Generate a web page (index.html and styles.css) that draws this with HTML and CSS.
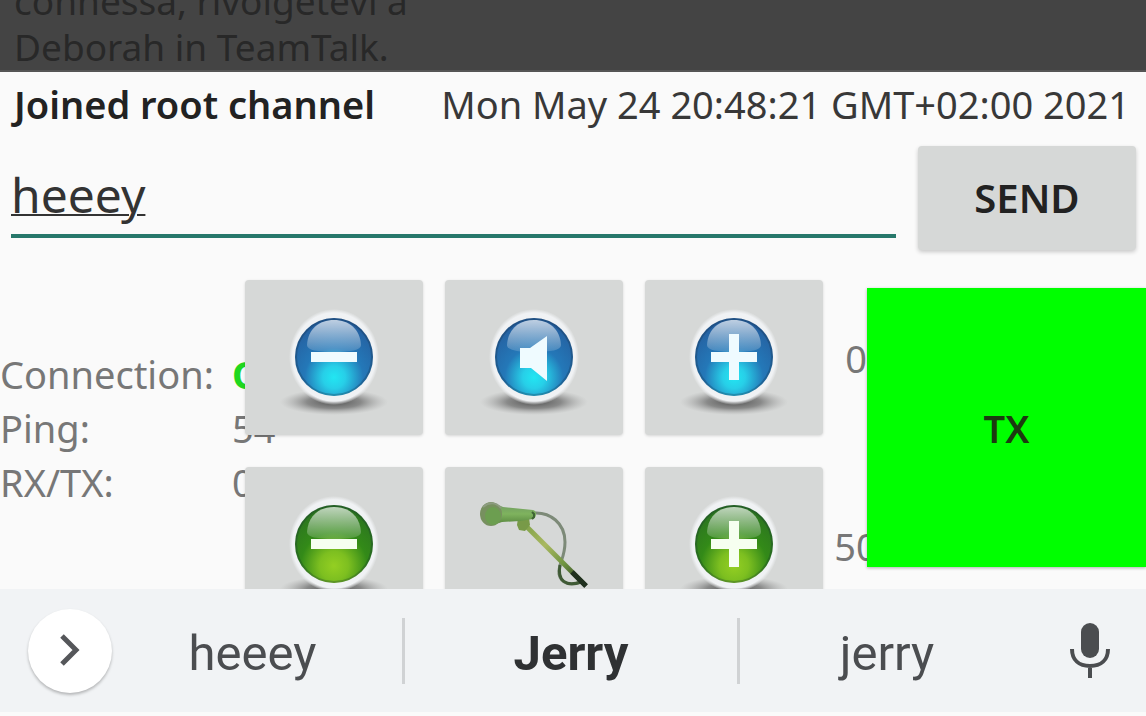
FILE: index.html
```html
<!DOCTYPE html>
<html lang="en">
<head>
<meta charset="utf-8">
<meta name="viewport" content="width=device-width, initial-scale=1">
<title>TeamTalk</title>
<link rel="stylesheet" href="styles.css">
</head>
<body>
<svg class="defs" aria-hidden="true">
  <defs>
    <radialGradient id="blue" cx="50%" cy="76%" r="72%">
      <stop offset="0" stop-color="#22e6f2"/><stop offset=".2" stop-color="#27cfe8"/><stop offset=".52" stop-color="#2478b8"/><stop offset="1" stop-color="#255f9f"/>
    </radialGradient>
    <radialGradient id="green" cx="50%" cy="78%" r="74%">
      <stop offset="0" stop-color="#94cf22"/><stop offset=".25" stop-color="#7dbf20"/><stop offset=".58" stop-color="#338a18"/><stop offset="1" stop-color="#2b7420"/>
    </radialGradient>
    <linearGradient id="gloss" x1="0" y1="0" x2="0" y2="1">
      <stop offset="0" stop-color="#fff" stop-opacity=".7"/><stop offset="1" stop-color="#fff" stop-opacity=".14"/>
    </linearGradient>
    <radialGradient id="shade">
      <stop offset="0" stop-color="#444" stop-opacity=".9"/><stop offset=".5" stop-color="#555" stop-opacity=".6"/><stop offset="1" stop-color="#999" stop-opacity="0"/>
    </radialGradient>
    <radialGradient id="halo">
      <stop offset=".92" stop-color="#f0f2f4"/><stop offset="1" stop-color="#f0f2f4" stop-opacity="0"/>
    </radialGradient>
    <linearGradient id="stand" x1="0" y1="0" x2="1" y2="1">
      <stop offset="0" stop-color="#7da048"/><stop offset=".35" stop-color="#a9b860"/><stop offset=".65" stop-color="#6f9440"/><stop offset="1" stop-color="#1c2a1c"/>
    </linearGradient>
    <linearGradient id="handle" x1="0" y1="0" x2="0" y2="1">
      <stop offset="0" stop-color="#6f9a62"/><stop offset=".5" stop-color="#7fb35e"/><stop offset="1" stop-color="#55833c"/>
    </linearGradient>
  </defs>
  <symbol id="base" viewBox="0 0 120 120">
    <ellipse cx="60" cy="104" rx="54" ry="13" fill="url(#shade)"/>
    <ellipse cx="60" cy="59" rx="45" ry="48" fill="url(#halo)"/>
  </symbol>
  <symbol id="shine" viewBox="0 0 120 120">
    <circle cx="60" cy="59" r="38" fill="none" stroke="#123" stroke-opacity=".25" stroke-width="2"/>
    <path d="M33 47C34 31 45 22 60 22s26 9 27 25c0 5-10 7-27 7s-27-2-27-7z" fill="url(#gloss)"/>
  </symbol>
</svg>

<header class="message">
  <p class="message-text">connessa, rivolgetevi a<br>Deborah in TeamTalk.</p>
</header>

<main class="channel">
  <div class="status">
    <strong class="status-title">Joined root channel</strong>
    <time class="status-time">Mon May 24 20:48:21 GMT+02:00 2021</time>
  </div>
  <form class="compose">
    <input class="compose-input" type="text" value="heeey" aria-label="Message" spellcheck="false">
    <button class="compose-send" type="button">SEND</button>
  </form>

  <section class="panel">
    <dl class="stats">
      <dt>Connection:</dt><dd class="online">O</dd>
      <dt>Ping:</dt><dd>54</dd>
      <dt>RX/TX:</dt><dd>0</dd>
    </dl>
    <div class="controls">
      <button class="control" type="button" aria-label="Decrease volume">
        <svg class="orb" viewBox="0 0 120 120"><use href="#base"/><circle cx="60" cy="59" r="39" fill="url(#blue)"/><use href="#shine"/><path d="M37 54h46v10H37z" fill="#effbff"/></svg>
      </button>
      <button class="control" type="button" aria-label="Mute speaker">
        <svg class="orb" viewBox="0 0 120 120"><use href="#base"/><circle cx="60" cy="59" r="39" fill="url(#blue)"/><use href="#shine"/><path d="M46 50h10l17-12v45L57 70H46z" fill="#effbff"/></svg>
      </button>
      <button class="control" type="button" aria-label="Increase volume">
        <svg class="orb" viewBox="0 0 120 120"><use href="#base"/><circle cx="60" cy="59" r="39" fill="url(#blue)"/><use href="#shine"/><path d="M37 54h18V36h10v18h18v10H65v18H55V64H37z" fill="#effbff"/></svg>
      </button>
      <button class="control" type="button" aria-label="Decrease microphone gain">
        <svg class="orb" viewBox="0 0 120 120"><use href="#base"/><circle cx="60" cy="59" r="39" fill="url(#green)"/><use href="#shine"/><path d="M37 54h46v10H37z" fill="#f6fff0"/></svg>
      </button>
      <button class="control" type="button" aria-label="Voice activation">
        <svg class="orb" viewBox="0 0 120 120" fill="none">
          <path d="M60 28C76 27 91 38 91 57C91 74 84 78 85 89C87 99 97 101 107 97" stroke="#7d8a78" stroke-width="3"/>
          <path d="M86 80C83 96 92 102 107 97" stroke="#3f5a35" stroke-width="3"/>
          <path d="M49 38L112 101" stroke="url(#stand)" stroke-width="5"/>
          <path d="M98 87L112 101" stroke="#20301e" stroke-width="5"/>
          <path d="M44 33h11l1 7-5 6-6-1-2-5z" fill="#789a48"/>
          <path d="M20 18l9 4 30 3c4 1 4 7 0 9l-13 2-18 1-9 3z" fill="url(#handle)"/>
          <ellipse cx="17" cy="29" rx="11" ry="12" fill="#77905f"/>
          <ellipse cx="19" cy="31" rx="8" ry="9" fill="#6c9e50"/>
          <path d="M9 22c6-5 13-5 18 1" stroke="#8d9b80" stroke-width="2"/>
          <path d="M58 27l2 2v3l-2 2" stroke="#3f6434" stroke-width="2"/>
        </svg>
      </button>
      <button class="control" type="button" aria-label="Increase microphone gain">
        <svg class="orb" viewBox="0 0 120 120"><use href="#base"/><circle cx="60" cy="59" r="39" fill="url(#green)"/><use href="#shine"/><path d="M37 54h18V36h10v18h18v10H65v18H55V64H37z" fill="#f6fff0"/></svg>
      </button>
    </div>
    <div class="levels"><span>0</span><span>50</span></div>
    <button class="transmit" type="button">TX</button>
  </section>
</main>

<footer class="suggestions">
  <button class="expand" type="button" aria-label="More">
    <svg class="chevron" viewBox="0 0 24 36"><path d="M4 3l14 14L4 31" fill="none" stroke="#55575a" stroke-width="5"/></svg>
  </button>
  <button class="word" type="button">heeey</button>
  <button class="word word-main" type="button">Jerry</button>
  <button class="word" type="button">jerry</button>
  <button class="voice" type="button" aria-label="Voice input">
    <svg class="voice-icon" viewBox="0 0 44 58"><rect x="13" y="1" width="18" height="35" rx="9" fill="#4b4d50"/><path d="M4 27C4 38 11 44 22 44S40 38 40 27M22 44V56" fill="none" stroke="#4b4d50" stroke-width="4"/></svg>
  </button>
</footer>
</body>
</html>
```
FILE: styles.css
```css
* { box-sizing: border-box; }

body {
  margin: 0;
  height: 100vh;
  display: flex;
  flex-direction: column;
  overflow: hidden;
  background: #fafafa;
  color: #222;
  font-family: "Noto Sans", "Open Sans", sans-serif;
  font-size: 38px;
  line-height: 54px;
}

button {
  border: 0;
  padding: 0;
  font: inherit;
  color: inherit;
}

.defs { position: absolute; width: 0; height: 0; }

.message {
  flex: none;
  height: 72px;
  display: flex;
  align-items: flex-end;
  overflow: hidden;
  padding: 0 14px;
  background: #444;
  border-bottom: 2px solid #555;
  color: #282828;
}

.message-text { margin: 0; font-size: 37px; line-height: 46px; }

.channel {
  flex: 1;
  min-height: 0;
  display: flex;
  flex-direction: column;
}

.status {
  display: flex;
  justify-content: space-between;
  padding: 5px 16px 15px 14px;
  white-space: nowrap;
}

.status-title { font-weight: 600; }
.status-time { color: #383838; }

.compose {
  display: flex;
  align-items: flex-start;
  gap: 22px;
  padding: 0 10px 10px 11px;
}

.compose-input {
  flex: 1;
  min-width: 0;
  height: 92px;
  padding: 8px 0 0;
  border: 0;
  border-bottom: 4px solid #27786b;
  outline: 0;
  background: none;
  color: #333;
  font: inherit;
  font-size: 48px;
  text-decoration: underline;
  text-decoration-thickness: 2px;
}

.compose-send {
  width: 218px;
  height: 104px;
  border-radius: 4px;
  background: #d6d8d7;
  box-shadow: 0 2px 4px rgba(0, 0, 0, .2);
  font-size: 40px;
  font-weight: 600;
}

.panel {
  flex: 1;
  min-height: 0;
  overflow: hidden;
  display: grid;
  grid-template-columns: 245px 578px 1fr;
  grid-template-rows: max-content;
  align-items: start;
}

.stats {
  grid-area: 1 / 1 / 2 / 3;
  display: grid;
  grid-template-columns: 232px 1fr;
  margin: 0;
  padding-top: 87px;
  color: #777;
}

.stats dd { margin: 0; }
.stats .online { color: #1fd81f; font-weight: 700; }

.controls {
  grid-area: 1 / 2;
  z-index: 1;
  display: grid;
  grid-template-columns: repeat(3, 1fr);
  gap: 32px 22px;
  padding-top: 20px;
}

.control {
  display: flex;
  align-items: center;
  justify-content: center;
  height: 155px;
  border-radius: 4px;
  background: #d6d8d7;
  box-shadow: 0 1px 3px rgba(0, 0, 0, .15);
}

.orb { width: 120px; height: 120px; }

.levels {
  grid-area: 1 / 3;
  display: flex;
  flex-direction: column;
  gap: 134px;
  width: 44px;
  margin-left: 11px;
  padding-top: 71px;
  text-align: center;
  color: #777;
}

.transmit {
  grid-area: 1 / 3;
  z-index: 1;
  height: 279px;
  margin: 28px 0 0 44px;
  background: #0f0;
  box-shadow: 0 1px 3px rgba(0, 0, 0, .3);
  color: #1c3a10;
  font-weight: 600;
}

.suggestions {
  flex: none;
  height: 127px;
  display: grid;
  grid-template-columns: 103px 302fr 335fr 294fr 112px;
  align-items: center;
  background: #f1f3f5;
  border-bottom: 4px solid #fafafa;
  color: #4b4d50;
  font-family: Roboto, sans-serif;
  font-size: 49px;
}

.expand {
  width: 84px;
  height: 84px;
  margin-left: 28px;
  display: flex;
  align-items: center;
  justify-content: center;
  border-radius: 50%;
  background: #fff;
  box-shadow: 0 2px 3px rgba(0, 0, 0, .25);
}

.chevron { width: 24px; height: 36px; }

.word {
  height: 66px;
  padding-top: 6px;
  background: none;
  border-right: 3px solid #d0d2d4;
}

.word:nth-of-type(4) { border-right: 0; }
.word-main { color: #2f3133; font-weight: 700; }

.voice {
  display: flex;
  justify-content: center;
  background: none;
}

.voice-icon { width: 44px; height: 58px; }
```
